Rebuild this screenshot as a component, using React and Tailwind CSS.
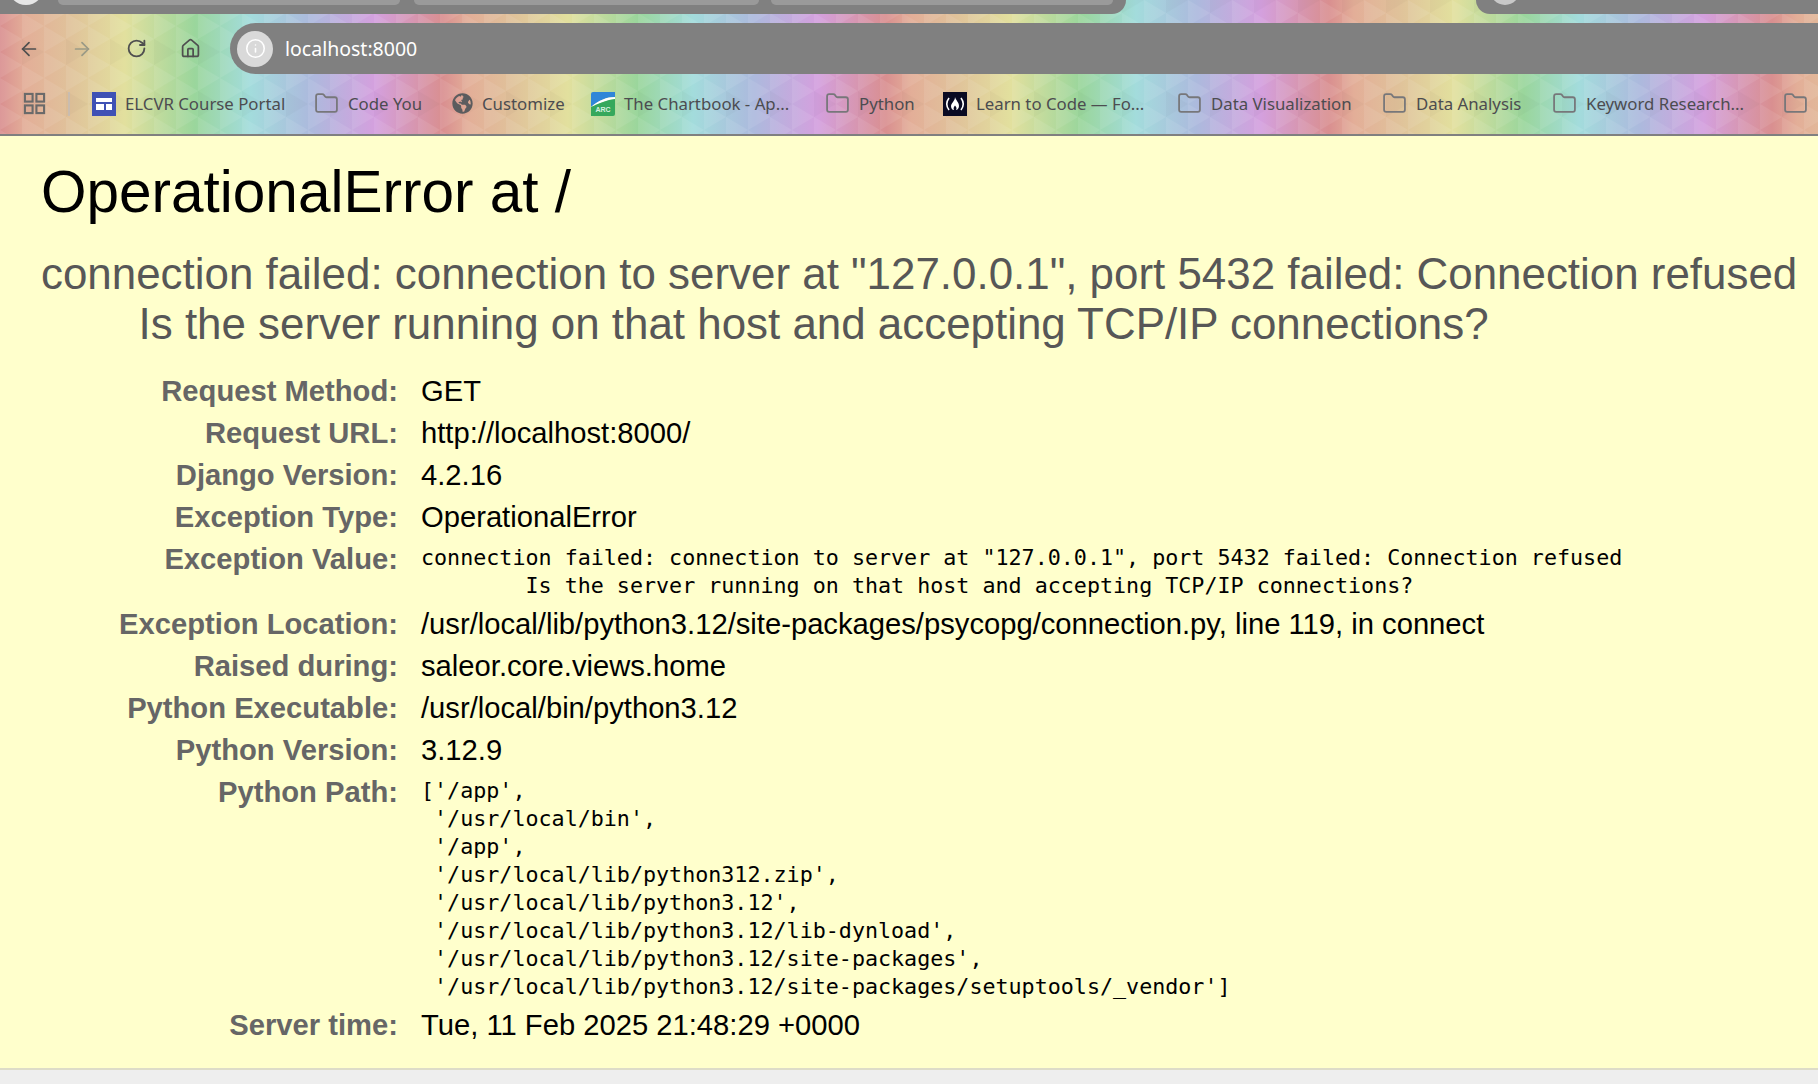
import { ArrowLeft, ArrowRight, Folder, Home, Info, RotateCw } from "lucide-react";
import { FaGlobeAmericas } from "react-icons/fa";

const BOOKMARKS = [
  { label: "ELCVR Course Portal", icon: "elcvr", width: "w-[222px]" },
  { label: "Code You", icon: "folder", width: "w-[138px]" },
  { label: "Customize", icon: "globe", width: "w-[139px]" },
  { label: "The Chartbook - Ap...", icon: "arc", width: "w-[234px]" },
  { label: "Python", icon: "folder", width: "w-[118px]" },
  { label: "Learn to Code — Fo...", icon: "fcc", width: "w-[234px]" },
  { label: "Data Visualization", icon: "folder", width: "w-[205px]" },
  { label: "Data Analysis", icon: "folder", width: "w-[170px]" },
  { label: "Keyword Research...", icon: "folder", width: "w-[231px]" },
  { label: "", icon: "folder", width: "w-[40px]" },
];

const PYTHON_PATH = `['/app',
 '/usr/local/bin',
 '/app',
 '/usr/local/lib/python312.zip',
 '/usr/local/lib/python3.12',
 '/usr/local/lib/python3.12/lib-dynload',
 '/usr/local/lib/python3.12/site-packages',
 '/usr/local/lib/python3.12/site-packages/setuptools/_vendor']`;

function BookmarkIcon({ type }) {
  if (type === "folder") {
    return <Folder className="size-[25px] shrink-0 text-[#77777a]" strokeWidth={1.7} />;
  }
  if (type === "globe") {
    return <FaGlobeAmericas className="size-[21px] shrink-0 text-[#5c5c5e]" />;
  }
  if (type === "elcvr") {
    return (
      <svg viewBox="0 0 24 24" className="size-6 shrink-0">
        <rect width="24" height="24" fill="#3f51b5" />
        <path d="M4 6h16v4H4zM4 12h8v6H4zM14 12h6v6h-6z" fill="#fff" />
      </svg>
    );
  }
  if (type === "arc") {
    return (
      <svg viewBox="0 0 24 24" className="size-6 shrink-0">
        <path d="M2 0h22v5C16 5 8 8 0 15V2a2 2 0 0 1 2-2z" fill="#2f86d8" />
        <path d="M0 15C8 8 16 5 24 5v2C18 8 10 10 4 14z" fill="#fff" />
        <path d="M0 24V15C8 11 16 8 24 7v15a2 2 0 0 1-2 2z" fill="#36a85c" />
        <text x="12" y="20" textAnchor="middle" fontSize="7" fontWeight="700" fill="#d8f0e0" fontFamily="Liberation Sans">ARC</text>
      </svg>
    );
  }
  return (
    <svg viewBox="0 0 24 24" className="size-6 shrink-0">
      <rect width="24" height="24" fill="#0a0a23" />
      <path d="M6 6c-3 4-3 8 0 12M18 6c3 4 3 8 0 12" fill="none" stroke="#fff" strokeWidth="1.6" />
      <path d="M12 5c.5 3 4 5 4 9 0 2-1.5 4-3 4 1-1.5.5-3-1-4.5-1 1.5-2 2.5-1 4.5-2 0-3-2-3-4 0-3 4-5 4-9z" fill="#fff" />
    </svg>
  );
}

function Meta({ label, children }) {
  return (
    <>
      <div className="pt-[4px] text-right font-bold text-[#666]">{label}:</div>
      <div className="pt-[4px] pb-[4px]">{children}</div>
    </>
  );
}

function Mono({ children }) {
  return (
    <pre className="mt-[2px] -mb-[1px] font-['DejaVu_Sans_Mono',monospace] text-[21.7px] leading-[28px] whitespace-pre">
      {children}
    </pre>
  );
}

function BrowserChrome() {
  return (
    <div className="relative h-[136px] shrink-0 overflow-hidden border-b-2 border-[#808080] bg-[repeating-linear-gradient(90deg,#d98f90_0px,#e3ae98_25px,#e0c29a_70px,#e2e09e_125px,#9ad69c_195px,#a3dcdc_250px,#acbadd_310px,#d4a0de_375px,#d98f90_443px)]">
      {/* triangle texture of the browser theme */}
      <svg className="absolute inset-0 size-full">
        <defs>
          <pattern id="tri" width="44" height="52" patternUnits="userSpaceOnUse">
            <path d="M0 0l22 13L0 26zM22 13l22 13-22 13zM0 26l22 13L0 52z" fill="#fff" fillOpacity="0.08" />
            <path d="M22 -13l22 13-22 13zM22 39l22 13-22 13z" fill="#000" fillOpacity="0.025" />
          </pattern>
        </defs>
        <rect width="100%" height="100%" fill="url(#tri)" />
      </svg>

      <div className="relative flex h-[14px] justify-between">
        <div className="flex w-[1126px] gap-[15px] overflow-hidden rounded-br-[14px] bg-[#808080] pl-[8px]">
          <div className="-mt-[31px] -mr-[1px] size-[36px] rounded-full bg-[#e6e6e6]" />
          <div className="h-[5px] w-[342px] rounded-b-[10px] bg-[#9a9a9a]" />
          <div className="-ml-[1px] h-[5px] w-[345px] rounded-b-[10px] bg-[#9a9a9a]" />
          <div className="-ml-[3px] h-[5px] w-[342px] rounded-b-[10px] bg-[#9a9a9a]" />
        </div>
        <div className="w-[342px] overflow-hidden rounded-bl-[14px] bg-[#808080] pl-[14px]">
          <div className="-mt-[25px] size-[30px] rounded-full bg-[#c8c8c8]" />
        </div>
      </div>

      <div className="relative mt-[9px] flex h-[51px] items-center">
        <div className="flex w-[230px] items-center text-[#4f4f4f]">
          <ArrowLeft className="ml-[18px] size-[22px]" strokeWidth={1.9} />
          <ArrowRight className="ml-[31px] size-[22px] text-[#9a9a86]" strokeWidth={1.9} />
          <RotateCw className="ml-[33px] size-[21px]" strokeWidth={2.1} />
          <Home className="ml-[33px] size-[21px]" strokeWidth={2} />
        </div>
        <div className="flex h-[51px] flex-1 items-center rounded-l-full bg-[#808080] pl-[7px]">
          <div className="flex size-[36px] items-center justify-center rounded-full bg-[#d9d9d9]">
            <Info className="size-[21px] text-white" strokeWidth={1.8} />
          </div>
          <span className="ml-[12px] font-['Noto_Sans',sans-serif] text-[19.5px] text-white">localhost:8000</span>
        </div>
      </div>

      <div className="relative mt-[9px] flex h-[41px] items-center font-['Noto_Sans',sans-serif] text-[16.8px] text-[#4c4c50]">
        <svg viewBox="0 0 24 24" className="ml-[23px] size-[23px] shrink-0" fill="none" stroke="#6a6a6a" strokeWidth="2.2">
          <rect x="2" y="2" width="8" height="8" />
          <rect x="14" y="2" width="8" height="8" />
          <rect x="2" y="14" width="8" height="8" />
          <rect x="14" y="14" width="8" height="8" />
        </svg>
        <div className="mx-[22px] h-[24px] w-[2px] shrink-0 bg-[#b8bcc8]/50" />
        {BOOKMARKS.map((b, i) => (
          <div key={i} className={`flex shrink-0 items-center gap-[9px] ${b.width}`}>
            <BookmarkIcon type={b.icon} />
            <span className="whitespace-nowrap">{b.label}</span>
          </div>
        ))}
      </div>
    </div>
  );
}

export default function App() {
  return (
    <div className="flex h-[1084px] flex-col overflow-hidden bg-[#eee] font-['Liberation_Sans',Arial,sans-serif] text-black">
      <BrowserChrome />
      <main className="h-[934px] shrink-0 border-b-2 border-[#dddcc8] bg-[#ffc] pl-[41px]">
        <h1 className="mt-[23px] text-[58.5px] leading-[66px] font-normal">OperationalError at /</h1>
        <pre className="mt-[24px] font-['Liberation_Sans',Arial,sans-serif] text-[43.9px] leading-[50px] whitespace-pre text-[#575757]">
          {`connection failed: connection to server at "127.0.0.1", port 5432 failed: Connection refused
        Is the server running on that host and accepting TCP/IP connections?`}
        </pre>
        <div className="mt-[21px] grid grid-cols-[357px_1fr] gap-x-[23px] text-[29.2px] leading-[34px]">
          <Meta label="Request Method">GET</Meta>
          <Meta label="Request URL">http://localhost:8000/</Meta>
          <Meta label="Django Version">4.2.16</Meta>
          <Meta label="Exception Type">OperationalError</Meta>
          <Meta label="Exception Value">
            <Mono>{`connection failed: connection to server at "127.0.0.1", port 5432 failed: Connection refused
        Is the server running on that host and accepting TCP/IP connections?`}</Mono>
          </Meta>
          <Meta label="Exception Location">/usr/local/lib/python3.12/site-packages/psycopg/connection.py, line 119, in connect</Meta>
          <Meta label="Raised during">saleor.core.views.home</Meta>
          <Meta label="Python Executable">/usr/local/bin/python3.12</Meta>
          <Meta label="Python Version">3.12.9</Meta>
          <Meta label="Python Path">
            <Mono>{PYTHON_PATH}</Mono>
          </Meta>
          <Meta label="Server time">Tue, 11 Feb 2025 21:48:29 +0000</Meta>
        </div>
      </main>
    </div>
  );
}
